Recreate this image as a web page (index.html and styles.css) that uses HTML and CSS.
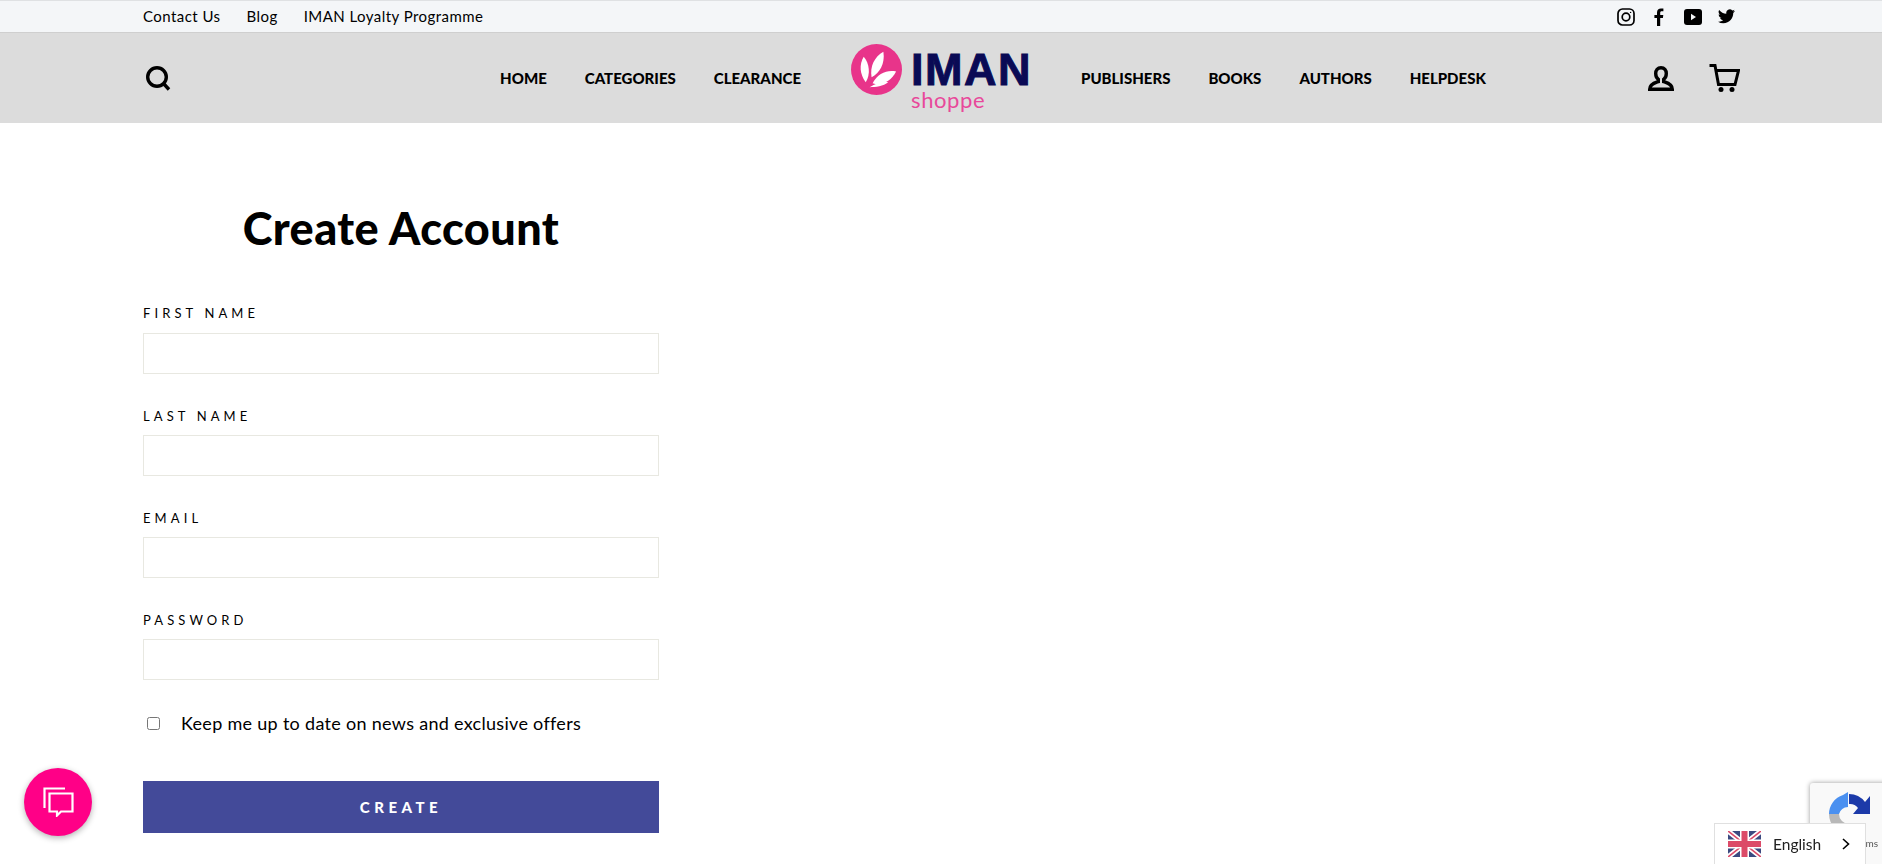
FILE: index.html
```html
<!DOCTYPE html>
<html lang="en">
  <head>
    <meta charset="UTF-8" />
    <meta name="viewport" content="width=device-width, initial-scale=1.0" />
    <title>Create Account</title>
    <link rel="stylesheet" href="styles.css">
  </head>
  <body>
    <div class="toolbar">
      <div class="toolbar-inner">
        <div class="toolbar-links">
          <a href="#">Contact Us</a>
          <a href="#">Blog</a>
          <a href="#">IMAN Loyalty Programme</a>
        </div>
        <div class="social">
          <a href="#" class="social-ig">
            <svg width="18" height="18" viewBox="0 0 18 18" fill="none" stroke="#000" stroke-width="1.7"><rect x="1" y="1" width="16" height="16" rx="4.5"/><circle cx="9" cy="9" r="3.8"/><circle cx="13.6" cy="4.4" r="0.7" fill="#000" stroke="none"/></svg>
          </a>
          <a href="#" class="social-fb">
            <svg width="10" height="18" viewBox="0 0 10 18"><path d="M3 18V10H0.4V7H3V4.6C3 1.8 4.6 0.4 7 0.4c1.1 0 2 .1 2.4.1v2.8H7.8C6.500 3.300 6.200 3.900 6.200 4.800V7h3.100l-.4 3H6.200v8z" fill="#000"/></svg>
          </a>
          <a href="#" class="social-yt">
            <svg width="18" height="16" viewBox="0 0 18 16"><rect width="18" height="16" rx="3" fill="#000"/><path d="M7 4.800 12 8 7 11.200z" fill="#f4f6f8"/></svg>
          </a>
          <a href="#" class="social-tw">
            <svg width="17" height="15" viewBox="0 0 24 20"><path d="M24 2.400a9.800 9.800 0 0 1-2.800.8A4.900 4.900 0 0 0 23.300.5a9.800 9.800 0 0 1-3.100 1.200 4.900 4.900 0 0 0-8.400 4.500A14 14 0 0 1 1.700.9a4.900 4.900 0 0 0 1.500 6.600 4.900 4.900 0 0 1-2.200-.6 4.900 4.900 0 0 0 3.900 4.900 4.900 4.900 0 0 1-2.200.1 4.900 4.900 0 0 0 4.600 3.400A9.900 9.900 0 0 1 0 17.300 14 14 0 0 0 7.500 19.500c9.100 0 14.300-7.700 14-14.600A10 10 0 0 0 24 2.400z" fill="#000"/></svg>
          </a>
        </div>
      </div>
    </div>

    <header class="site-header">
      <div class="header-side">
        <a href="#" class="icon-link search-link">
          <svg width="26" height="26" viewBox="0 0 26 26" fill="none" stroke="#000" stroke-width="3.400"><circle cx="12" cy="12" r="9.300"/><path d="M18.500 18.500 24 24.500"/></svg>
        </a>
        <nav class="nav">
          <a href="#">Home</a>
          <a href="#">Categories</a>
          <a href="#">Clearance</a>
        </nav>
      </div>

      <a href="#" class="logo">
        <svg class="logo-mark" width="51" height="51" viewBox="0 0 52 52">
          <circle cx="26" cy="26" r="26" fill="#e8348a"/>
          <path d="M13 13C8 21 9 31 15 39 20 31 19 20 13 13z" fill="#fff"/>
          <path d="M33 8C24 13 19 23 21 34 29 30 35 20 33 8z" fill="#fff"/>
          <path d="M46 28C37 26 27 30 22 40 31 43 41 38 46 28z" fill="#fff"/>
          <path d="M19 44C25 44 33 43 38 39 33 38 25 40 19 44z" fill="#fff"/>
        </svg>
        <span class="logo-text">
          <span class="logo-name">IMAN</span>
          <span class="logo-sub">shoppe</span>
        </span>
      </a>

      <div class="header-side">
        <nav class="nav">
          <a href="#">Publishers</a>
          <a href="#">Books</a>
          <a href="#">Authors</a>
          <a href="#">Helpdesk</a>
        </nav>
        <div class="header-icons">
          <a href="#" class="icon-link">
            <svg width="26" height="25" viewBox="0 0 26 25" fill="none" stroke="#000" stroke-width="3.400"><path d="M13 1.700c-3.400 0-5.300 2.500-5.300 5.800 0 2.500 1 4.600 2.600 5.800v2.400C7 16.800 1.700 18 1.700 23.300h22.600C24.300 18 19 16.800 15.700 15.700v-2.400c1.600-1.200 2.600-3.300 2.600-5.800 0-3.300-1.900-5.800-5.300-5.800z"/></svg>
          </a>
          <a href="#" class="icon-link">
            <svg width="31" height="28" viewBox="0 0 31 28" fill="none" stroke="#000" stroke-width="3"><path d="M0.500 1.500H6L9.500 20.500H26L29.500 6.500H7"/><circle cx="12" cy="25.500" r="2.500" fill="#000" stroke="none"/><circle cx="23" cy="25.500" r="2.500" fill="#000" stroke="none"/></svg>
          </a>
        </div>
      </div>
    </header>

    <main class="page">
      <form class="account-form">
        <h1>Create Account</h1>
        <label for="first-name">First Name</label>
        <input type="text" id="first-name" />
        <label for="last-name">Last Name</label>
        <input type="text" id="last-name" />
        <label for="email">Email</label>
        <input type="email" id="email" />
        <label for="password">Password</label>
        <input type="password" id="password" />
        <div class="check-row">
          <input type="checkbox" id="offers" />
          <span>Keep me up to date on news and exclusive offers</span>
        </div>
        <button type="button" class="submit-btn">Create</button>
      </form>
    </main>

    <button type="button" class="chat-btn">
      <svg width="31" height="30" viewBox="0 0 31 30" fill="none" stroke="#fff" stroke-width="2.200"><path d="M22 1.500H1.500V21"/><path d="M6.500 6.500h23v18H18l-4 4v-4H6.500z"/></svg>
    </button>

    <div class="recaptcha">
      <svg width="44" height="44" viewBox="0 0 44 44">
        <path d="M2 22A20 20 0 0 1 16 3L21 0V15A10 10 0 0 0 12 22z" fill="#4a90f0"/>
        <path d="M22 2A20 20 0 0 1 38 10L43 4V22H26L31 16A10 10 0 0 0 22 12z" fill="#1c3aa9"/>
        <path d="M2 22A20 20 0 0 0 22 42V32A10 10 0 0 1 12 22z" fill="#b8b8b8"/>
      </svg>
      <span class="recaptcha-terms">Terms</span>
    </div>

    <div class="lang-picker">
      <svg width="33" height="26" viewBox="0 0 33 26">
        <rect width="33" height="26" fill="#3c4a80"/>
        <path d="M0 0 33 26M33 0 0 26" stroke="#fff" stroke-width="5"/>
        <path d="M0 0 33 26M33 0 0 26" stroke="#dc4a68" stroke-width="1.600"/>
        <path d="M16.500 0V26M0 13H33" stroke="#fff" stroke-width="9"/>
        <path d="M16.500 0V26M0 13H33" stroke="#dc4a68" stroke-width="6"/>
      </svg>
      <span>English</span>
      <svg class="lang-arrow" width="8" height="12" viewBox="0 0 8 12" fill="none" stroke="#000" stroke-width="1.600"><path d="M1 1l5.500 5L1 11"/></svg>
    </div>
  </body>
</html>
```

FILE: styles.css
```css
* {
  box-sizing: border-box;
}
html,
body {
  height: 100%;
}
body {
  margin: 0;
  font-family: Lato, Arial, sans-serif;
  color: #000;
  background-color: #fff;
  overflow: hidden;
}
a {
  color: #000;
  text-decoration: none;
}
.toolbar {
  height: 33px;
  background-color: #f4f6f8;
  border-top: 1px solid #dfe1e3;
  border-bottom: 1px solid #cfcfcf;
}
.toolbar-inner {
  display: flex;
  justify-content: space-between;
  align-items: center;
  height: 100%;
  padding: 0 143px;
}
.toolbar-links {
  display: flex;
  gap: 26px;
  margin-top: -2px;
  font-size: 15px;
  letter-spacing: 0.450px;
}
.social {
  display: flex;
  align-items: center;
  margin-right: 4px;
}
.social a {
  display: flex;
}
.social-fb {
  margin-left: 19px;
}
.social-yt {
  margin-left: 20px;
}
.social-tw {
  margin-left: 16px;
}
.site-header {
  display: grid;
  grid-template-columns: 1fr auto 1fr;
  column-gap: 50px;
  align-items: center;
  height: 90px;
  padding: 0 143px;
  background-color: #dcdcdc;
}
.header-side {
  display: flex;
  justify-content: space-between;
  align-items: center;
}
.icon-link {
  display: flex;
}
.search-link {
  margin-left: 2px;
}
.nav {
  display: flex;
  gap: 38px;
}
.nav a {
  font-size: 15px;
  font-weight: 900;
  text-transform: uppercase;
}
.header-icons {
  display: flex;
  align-items: center;
  gap: 35px;
  margin-right: -1px;
}
.logo {
  display: flex;
  align-items: flex-start;
  gap: 9px;
  height: 70px;
  padding-top: 1px;
}
.logo-text {
  display: flex;
  flex-direction: column;
  width: 120px;
  padding-top: 9px;
}
.logo-name {
  font-family: "Liberation Sans", Arial, sans-serif;
  font-size: 45px;
  font-weight: 700;
  line-height: 34px;
  letter-spacing: 1.500px;
  color: #0a0a55;
  -webkit-text-stroke: 1px #0a0a55;
}
.logo-sub {
  font-size: 22px;
  line-height: 20px;
  letter-spacing: 0.600px;
  color: #e8489a;
  margin-top: 3px;
}
.page {
  padding: 81px 143px 0;
}
.account-form {
  width: 516px;
}
h1 {
  margin: 0 0 53px;
  font-size: 45px;
  font-weight: 900;
  line-height: 48px;
  letter-spacing: 0.450px;
  text-align: center;
}
label {
  display: block;
  height: 16px;
  margin: 34px 0 11px;
  font-size: 13px;
  line-height: 16px;
  letter-spacing: 4.100px;
  text-transform: uppercase;
}
h1 + label {
  margin: 0 0 12px;
}
input[type="text"],
input[type="email"],
input[type="password"] {
  display: block;
  width: 100%;
  height: 41px;
  border: 1px solid #e8e8e1;
  background-color: #fff;
}
.check-row {
  display: flex;
  align-items: center;
  height: 24px;
  margin-top: 31px;
  font-size: 18px;
  letter-spacing: 0.300px;
}
.check-row input {
  width: 13px;
  height: 13px;
  margin: 0 21px 0 4px;
}
.submit-btn {
  display: block;
  width: 100%;
  height: 52px;
  margin-top: 46px;
  border: none;
  background-color: #434a99;
  color: #fff;
  font-family: Lato, Arial, sans-serif;
  font-size: 15px;
  font-weight: 900;
  letter-spacing: 4.500px;
  text-transform: uppercase;
}
.chat-btn {
  position: fixed;
  left: 24px;
  top: 768px;
  display: flex;
  justify-content: center;
  align-items: center;
  width: 68px;
  height: 68px;
  border: none;
  border-radius: 50%;
  background-color: #ff0087;
  box-shadow: 0 2px 6px rgba(0, 0, 0, 0.3);
}
.recaptcha {
  position: fixed;
  left: 1810px;
  top: 783px;
  width: 90px;
  height: 81px;
  padding: 9px 0 0 17px;
  background-color: #f9f9f9;
  border-radius: 3px 0 0 0;
  box-shadow: 0 0 5px rgba(0, 0, 0, 0.4);
}
.recaptcha svg {
  display: block;
}
.recaptcha-terms {
  position: absolute;
  left: 42px;
  top: 54px;
  font-size: 10px;
  color: #555;
}
.lang-picker {
  position: fixed;
  left: 1714px;
  top: 823px;
  display: flex;
  align-items: center;
  width: 152px;
  height: 41px;
  padding: 0 15px 0 13px;
  background-color: #fff;
  border: 1px solid #e0e0e0;
  border-bottom: none;
  font-size: 15.500px;
  color: #222;
}
.lang-picker span {
  margin-left: 12px;
}
.lang-arrow {
  margin-left: auto;
}
```
